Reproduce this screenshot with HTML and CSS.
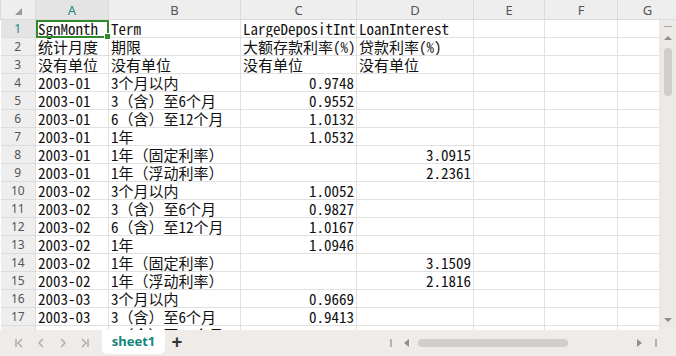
FILE: index.html
```html
<!DOCTYPE html>
<html lang="zh">

<head>
  <meta charset="UTF-8">
  <meta name="viewport" content="width=device-width, initial-scale=1.0">
  <link rel="icon" href="data:,">
  <link rel="stylesheet" href="styles.css">
  <title>sheet1</title>
</head>

<body>
  <div class="app">
    <div class="main">
      <div class="grid">
        <table class="sheet">
          <colgroup>
            <col class="c-row">
            <col class="c-a">
            <col class="c-b">
            <col class="c-c">
            <col class="c-d">
            <col class="c-e">
            <col class="c-f">
            <col class="c-g">
          </colgroup>
          <thead>
            <tr>
              <th class="corner"><span class="tri"></span></th>
              <th class="active">A</th>
              <th>B</th>
              <th>C</th>
              <th>D</th>
              <th>E</th>
              <th>F</th>
              <th>G</th>
            </tr>
          </thead>
          <tbody>
            <tr>
              <th class="active">1</th>
              <td class="selected">SgnMonth<span class="handle"></span></td>
              <td>Term</td>
              <td>LargeDepositInterest</td>
              <td>LoanInterest</td>
              <td></td><td></td><td></td>
            </tr>
            <tr><th>2</th><td>统计月度</td><td>期限</td><td>大额存款利率(%)</td><td>贷款利率(%)</td><td></td><td></td><td></td></tr>
            <tr><th>3</th><td>没有单位</td><td>没有单位</td><td>没有单位</td><td>没有单位</td><td></td><td></td><td></td></tr>
            <tr><th>4</th><td>2003-01</td><td>3个月以内</td><td class="num">0.9748</td><td></td><td></td><td></td><td></td></tr>
            <tr><th>5</th><td>2003-01</td><td>3（含）至6个月</td><td class="num">0.9552</td><td></td><td></td><td></td><td></td></tr>
            <tr><th>6</th><td>2003-01</td><td>6（含）至12个月</td><td class="num">1.0132</td><td></td><td></td><td></td><td></td></tr>
            <tr><th>7</th><td>2003-01</td><td>1年</td><td class="num">1.0532</td><td></td><td></td><td></td><td></td></tr>
            <tr><th>8</th><td>2003-01</td><td>1年（固定利率）</td><td></td><td class="num">3.0915</td><td></td><td></td><td></td></tr>
            <tr><th>9</th><td>2003-01</td><td>1年（浮动利率）</td><td></td><td class="num">2.2361</td><td></td><td></td><td></td></tr>
            <tr><th>10</th><td>2003-02</td><td>3个月以内</td><td class="num">1.0052</td><td></td><td></td><td></td><td></td></tr>
            <tr><th>11</th><td>2003-02</td><td>3（含）至6个月</td><td class="num">0.9827</td><td></td><td></td><td></td><td></td></tr>
            <tr><th>12</th><td>2003-02</td><td>6（含）至12个月</td><td class="num">1.0167</td><td></td><td></td><td></td><td></td></tr>
            <tr><th>13</th><td>2003-02</td><td>1年</td><td class="num">1.0946</td><td></td><td></td><td></td><td></td></tr>
            <tr><th>14</th><td>2003-02</td><td>1年（固定利率）</td><td></td><td class="num">3.1509</td><td></td><td></td><td></td></tr>
            <tr><th>15</th><td>2003-02</td><td>1年（浮动利率）</td><td></td><td class="num">2.1816</td><td></td><td></td><td></td></tr>
            <tr><th>16</th><td>2003-03</td><td>3个月以内</td><td class="num">0.9669</td><td></td><td></td><td></td><td></td></tr>
            <tr><th>17</th><td>2003-03</td><td>3（含）至6个月</td><td class="num">0.9413</td><td></td><td></td><td></td><td></td></tr>
            <tr><th>18</th><td>2003-03</td><td>6（含）至12个月</td><td class="num">0.9812</td><td></td><td></td><td></td><td></td></tr>
          </tbody>
        </table>
      </div>

      <div class="vside">
        <div class="vside-head"></div>
        <div class="vscroll">
          <span class="dash"></span>
          <span class="arrow up"></span>
          <span class="vthumb"></span>
          <span class="spacer"></span>
          <span class="arrow down"></span>
        </div>
      </div>
    </div>

    <div class="tabbar">
      <div class="nav">
        <svg width="10" height="10" viewBox="0 0 10 10"><path d="M2 1v8M8 1L4 5l4 4" /></svg>
        <svg width="10" height="10" viewBox="0 0 10 10"><path d="M7 1L3 5l4 4" /></svg>
        <svg width="10" height="10" viewBox="0 0 10 10"><path d="M3 1l4 4-4 4" /></svg>
        <svg width="10" height="10" viewBox="0 0 10 10"><path d="M2 1l4 4-4 4M8 1v8" /></svg>
      </div>
      <div class="tab">sheet1</div>
      <div class="add">+</div>
      <div class="hscroll">
        <span class="bar"></span>
        <span class="arrow left"></span>
        <span class="hthumb"></span>
        <span class="spacer"></span>
        <span class="arrow right"></span>
        <span class="bar"></span>
      </div>
    </div>
  </div>
</body>

</html>
```

FILE: styles.css
```css
body {
  margin: 0;
  font-family: "Noto Sans", "Liberation Sans", sans-serif;
  background: #fff;
}

.app {
  display: flex;
  flex-direction: column;
  width: 676px;
  height: 356px;
  overflow: hidden;
}

.main {
  display: flex;
  height: 330px;
}

.grid {
  flex: 1;
  overflow: hidden;
}

.sheet {
  table-layout: fixed;
  border-collapse: collapse;
  width: 677px;
}

.c-row { width: 35px; }
.c-a { width: 73px; }
.c-b { width: 132px; }
.c-c { width: 116px; }
.c-d { width: 117px; }
.c-e { width: 71px; }
.c-f { width: 73px; }
.c-g { width: 60px; }

.sheet th,
.sheet td {
  border: 1px solid #e1e1e1;
  padding: 0;
  white-space: nowrap;
  overflow: hidden;
}

.sheet thead th {
  height: 19px;
  background: #eeeeee;
  color: #555;
  font-size: 13px;
  font-weight: normal;
  border-color: #dcdcdc;
  border-top: 0;
}

.sheet thead th.active {
  background: #e4e4e4;
  color: #1a8a80;
}

.corner {
  position: relative;
  border-left: 0;
}

.tri {
  position: absolute;
  right: 13px;
  bottom: 4px;
  border-left: 7px solid transparent;
  border-bottom: 7px solid #9a9a9a;
}

.sheet tbody th {
  height: 17px;
  background: #eeeeee;
  color: #555;
  font-size: 12px;
  font-weight: normal;
  border-color: #dcdcdc;
  border-left: 0;
}

.sheet tbody th.active {
  background: #e4e4e4;
  color: #1a8a80;
}

.sheet td {
  height: 17px;
  padding: 0 2px 0 2px;
  font-family: "Noto Sans Mono CJK SC", "Liberation Mono", "Noto Sans CJK SC", monospace;
  font-size: 15px;
  line-height: 17px;
  color: #111;
}

.sheet td.num {
  text-align: right;
}

.sheet td.selected {
  position: relative;
  overflow: visible;
  outline: 2px solid #2f8a2f;
  outline-offset: -2px;
}

.handle {
  position: absolute;
  right: -3px;
  bottom: -3px;
  width: 5px;
  height: 5px;
  background: #2f8a2f;
  border: 1px solid #fff;
}

.vside {
  display: flex;
  flex-direction: column;
  width: 17px;
}

.vside-head {
  height: 20px;
  background: #eeeeee;
  border-bottom: 1px solid #dcdcdc;
  box-sizing: border-box;
}

.vscroll {
  flex: 1;
  display: flex;
  flex-direction: column;
  align-items: center;
  background: #ece9e7;
  padding: 6px 0 8px;
}

.dash {
  width: 8px;
  height: 1px;
  background: #a9a9a9;
}

.arrow {
  width: 0;
  height: 0;
}

.arrow.up {
  margin-top: 9px;
  border-left: 4px solid transparent;
  border-right: 4px solid transparent;
  border-bottom: 4px solid #8f8f8f;
}

.arrow.down {
  border-left: 4px solid transparent;
  border-right: 4px solid transparent;
  border-top: 4px solid #8f8f8f;
}

.vthumb {
  margin-top: 8px;
  width: 8px;
  height: 48px;
  border-radius: 4px;
  background: #d0cdcb;
}

.spacer {
  flex: 1;
}

.tabbar {
  display: flex;
  align-items: flex-start;
  height: 26px;
  background: #eeebe9;
}

.nav {
  display: flex;
  flex: none;
  gap: 12px;
  padding: 8px 0 0 14px;
  width: 102px;
  box-sizing: border-box;
}

.nav svg path {
  fill: none;
  stroke: #adadad;
  stroke-width: 1.5;
}

.tab {
  flex: none;
  width: 63px;
  height: 24px;
  line-height: 23px;
  background: #fff;
  border-radius: 0 0 5px 5px;
  text-align: center;
  color: #14857b;
  font-weight: bold;
  font-size: 13px;
}

.add {
  flex: none;
  width: 24px;
  text-align: center;
  font-size: 19px;
  font-weight: bold;
  line-height: 24px;
  color: #333;
}

.hscroll {
  flex: 1;
  display: flex;
  align-items: center;
  height: 26px;
  padding: 0 19px 0 201px;
}

.bar {
  width: 2px;
  height: 8px;
  background: #b3b3b3;
}

.arrow.left {
  margin-left: 12px;
  border-top: 4px solid transparent;
  border-bottom: 4px solid transparent;
  border-right: 5px solid #8f8f8f;
}

.hthumb {
  margin-left: 9px;
  width: 150px;
  height: 8px;
  border-radius: 4px;
  background: #d0cdcb;
}

.arrow.right {
  margin-right: 13px;
  border-top: 4px solid transparent;
  border-bottom: 4px solid transparent;
  border-left: 5px solid #8f8f8f;
}
```
